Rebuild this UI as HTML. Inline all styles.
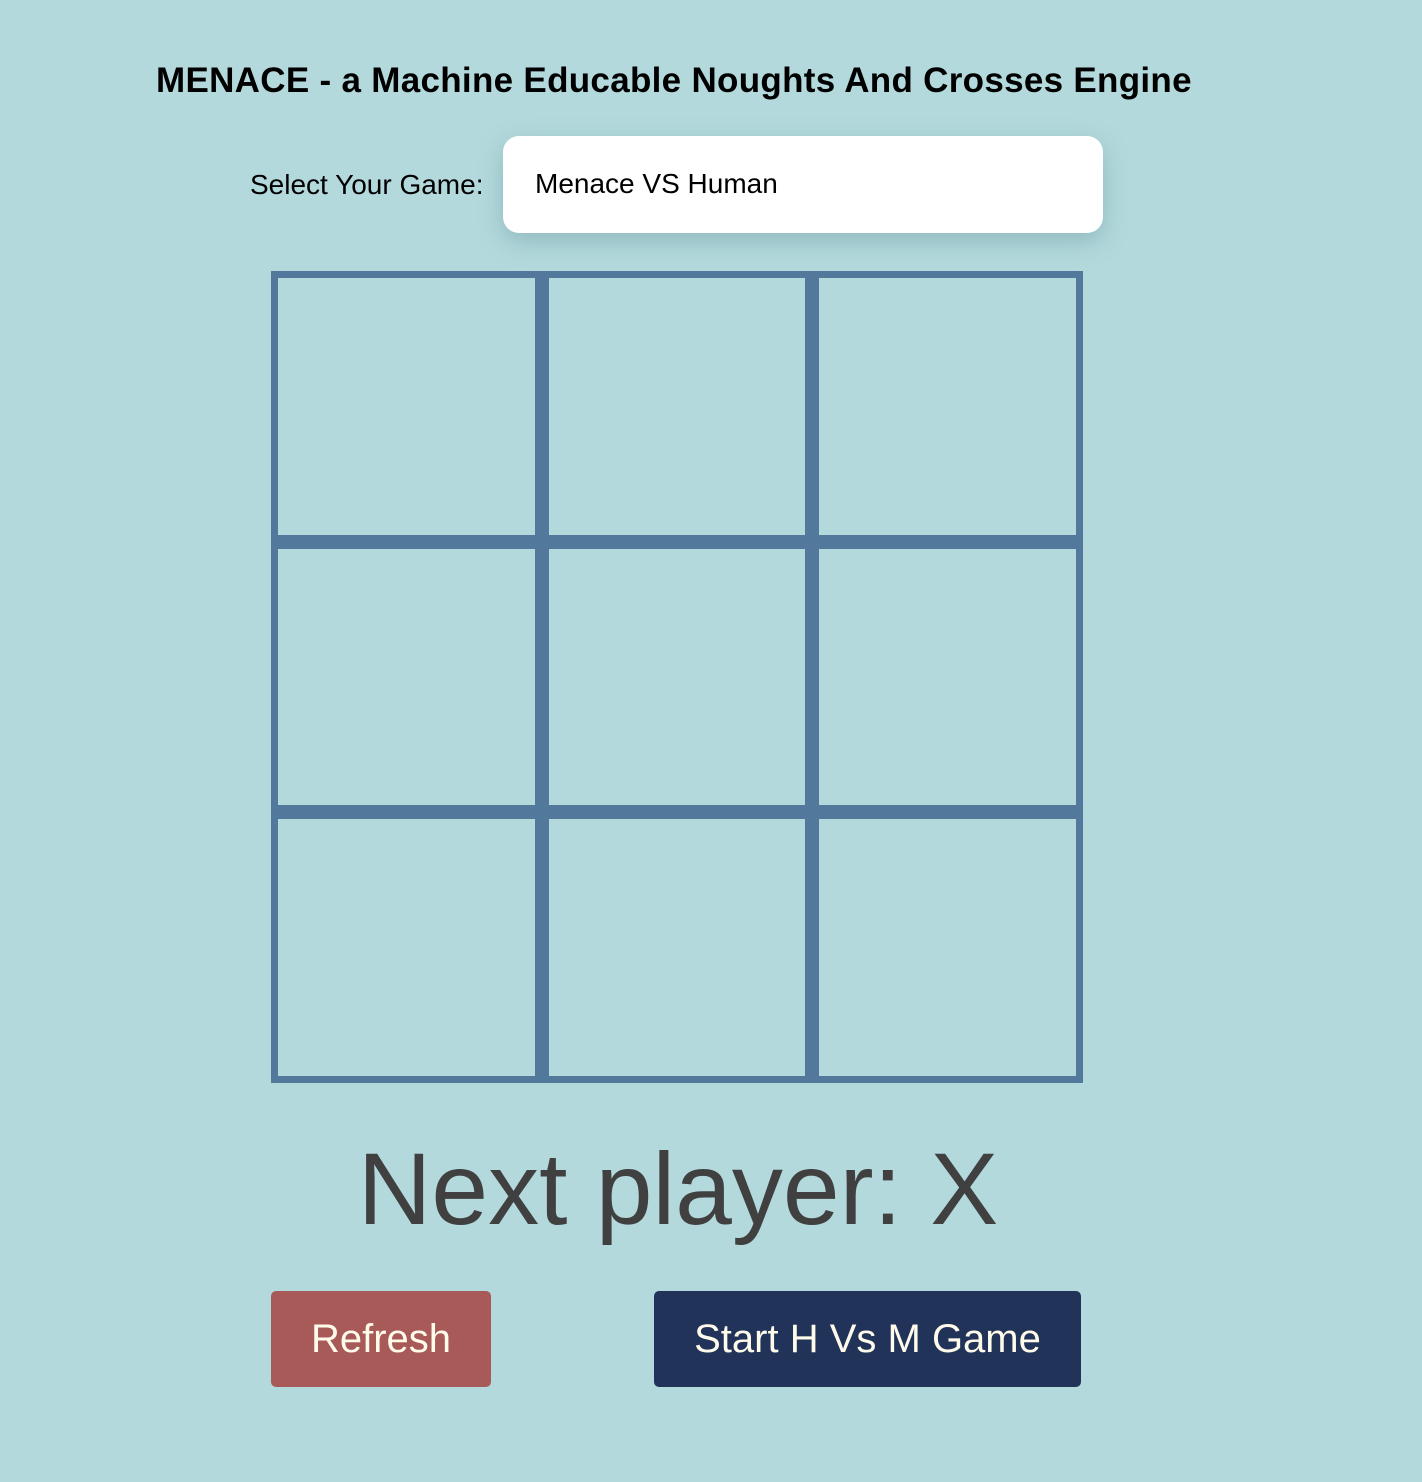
<!DOCTYPE html>
<html><head><style>
html,body{margin:0;padding:0}
body{width:1422px;height:1482px;background:#b3d9dc;position:relative;overflow:hidden;font-family:"Liberation Sans",sans-serif}
.a{position:absolute}
h1{position:absolute;left:156px;top:61px;margin:0;font-size:35px;font-weight:bold;white-space:nowrap;color:#000;letter-spacing:0.3px}
.lbl{left:250px;top:169px;font-size:28px;color:#000;white-space:nowrap}
.sel{left:503px;top:136px;width:600px;height:97px;background:#fff;border-radius:16px;box-shadow:0 8px 24px rgba(80,130,140,.35)}
.sel span{position:absolute;left:32px;top:32px;font-size:28px;color:#000}
.g{background:#52799b}
.next{left:0;width:1356px;text-align:center;top:1131px;font-size:102px;color:#404040;white-space:nowrap}
.btn{top:1291px;height:96px;border-radius:5px;color:#fffbea;font-size:40px;text-align:center;line-height:96px}
</style></head><body>
<h1>MENACE - a Machine Educable Noughts And Crosses Engine</h1>
<div class="a lbl">Select Your Game:</div>
<div class="a sel"><span>Menace VS Human</span></div>
<div class="a g" style="left:271px;top:271px;width:812px;height:7px"></div>
<div class="a g" style="left:271px;top:1076px;width:812px;height:7px"></div>
<div class="a g" style="left:271px;top:271px;width:7px;height:812px"></div>
<div class="a g" style="left:1076px;top:271px;width:7px;height:812px"></div>
<div class="a g" style="left:535px;top:271px;width:14px;height:812px"></div>
<div class="a g" style="left:805px;top:271px;width:14px;height:812px"></div>
<div class="a g" style="left:271px;top:535px;width:812px;height:14px"></div>
<div class="a g" style="left:271px;top:805px;width:812px;height:14px"></div>
<div class="a next">Next player: X</div>
<div class="a btn" style="left:271px;width:220px;background:#a85a58">Refresh</div>
<div class="a btn" style="left:654px;width:427px;background:#22335a">Start H Vs M Game</div>
</body></html>
